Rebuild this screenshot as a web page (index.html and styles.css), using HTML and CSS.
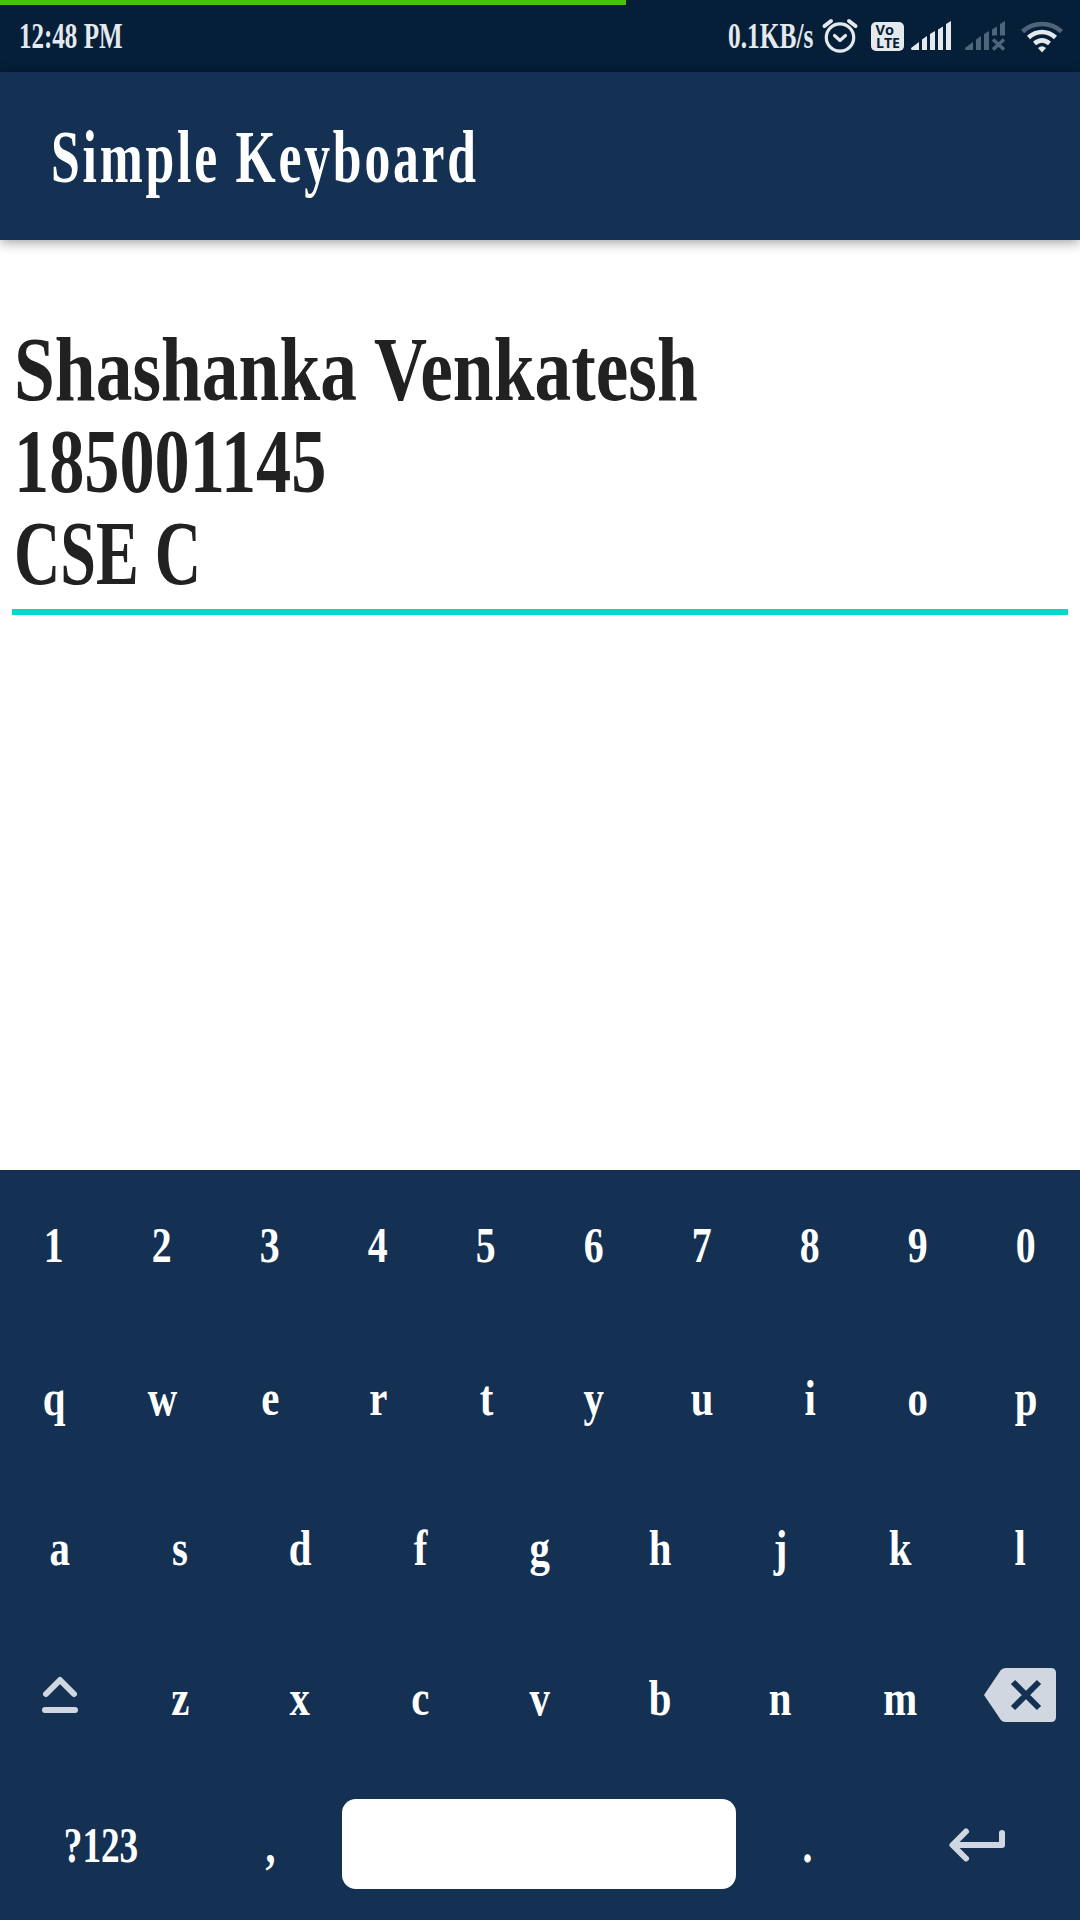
FILE: index.html
```html
<!DOCTYPE html>
<html lang="en">
<head>
<meta charset="utf-8">
<title>Simple Keyboard</title>
<link rel="stylesheet" href="styles.css">
</head>
<body>
<div class="screen">
  <div class="progress"></div>
  <header class="status">
    <span class="clock"><span class="squeeze">12:48 PM</span></span>
    <span class="rate"><span class="squeeze">0.1KB/s</span></span>
    <svg class="status-icons" viewBox="815 0 265 72" width="265" height="72">
      <g fill="none" stroke="#e4e9ed" stroke-width="3.2" stroke-linecap="round" stroke-linejoin="round">
        <circle cx="840" cy="37.5" r="13.7"/>
        <path d="M834.5 35.5l5.5 5 5.5-5"/>
        <path stroke-width="4" d="M824.5 26l6.500-5M855.500 26l-6.500-5"/>
      </g>
      <rect x="871" y="22" width="33" height="29" rx="5" fill="#e4e9ed"/>
      <text class="badge" x="875.5" y="34.8" textLength="18.5" lengthAdjust="spacingAndGlyphs">Vo</text>
      <text class="badge" x="876" y="47.5" textLength="24" lengthAdjust="spacingAndGlyphs">LTE</text>
      <path fill="#e4e9ed" d="M911 48l8-6v8h-7.500zM922 39.500l5-3.500v14h-5zM930 34l5-3v19h-5zM938 29.500l5-3v23.500h-5zM946 24l5-3v29h-5z"/>
      <g fill="#50647a">
        <path d="M965 48l8-6v8h-7.500zM976 39.500l5-3.500v14h-5zM984 34l5-3v19h-5zM992 29.500l5-3v9h-5zM1000 24l5-3v14.500h-5z"/>
        <path fill="none" stroke="#50647a" stroke-width="3.600" d="M993 39.500l11 10M1004 39.500l-11 10"/>
      </g>
      <g fill="none" stroke="#e4e9ed" stroke-width="4.500">
        <path stroke="#50647a" d="M1022.500 31.500c11-10 28-10 39 0"/>
        <path d="M1028.500 37.500c8-7.500 19-7.500 27 0M1034.500 43.500c5-4.200 10-4.200 15 0"/>
        <path fill="#e4e9ed" stroke="none" d="M1038 48q4-3.500 8 0l-4 4.500z"/>
      </g>
    </svg>
  </header>
  <div class="appbar"><h1 class="squeeze">Simple Keyboard</h1></div>
  <main class="content">
    <div class="field">
      <div class="line name"><span class="squeeze">Shashanka Venkatesh</span></div>
      <div class="line number"><span class="squeeze">185001145</span></div>
      <div class="line dept"><span class="squeeze">CSE C</span></div>
    </div>
  </main>
  <section class="keyboard">
    <div class="row ten"><b>1</b><b>2</b><b>3</b><b>4</b><b>5</b><b>6</b><b>7</b><b>8</b><b>9</b><b>0</b></div>
    <div class="row ten letters"><b>q</b><b>w</b><b>e</b><b>r</b><b>t</b><b>y</b><b>u</b><b>i</b><b>o</b><b>p</b></div>
    <div class="row nine letters"><b>a</b><b>s</b><b>d</b><b>f</b><b>g</b><b>h</b><b>j</b><b>k</b><b>l</b></div>
    <div class="row nine letters">
      <svg viewBox="0 0 120 150" width="120" height="150" fill="none" stroke="#d0d7e0" stroke-width="6" stroke-linecap="round" stroke-linejoin="round"><path d="M46 74l14-14 14 14M45 90h30"/></svg>
      <b>z</b><b>x</b><b>c</b><b>v</b><b>b</b><b>n</b><b>m</b>
      <svg viewBox="960 1620 120 150" width="120" height="150"><path fill="#d0d7e0" d="M984 1695l16.500-24.500q1.700-2.500 5-2.500h45.500q5 0 5 5v44q0 5-5 5h-45.500q-3.300 0-5-2.500z"/><path fill="none" stroke="#143153" stroke-width="6" d="M1013 1682l26 26M1039 1682l-26 26"/></svg>
    </div>
    <div class="row bottom">
      <b class="symbols">?123</b><b>,</b><span class="space"></span><b>.</b>
      <svg viewBox="874 1770 206 150" width="206" height="150" fill="none" stroke="#d0d7e0" stroke-width="6" stroke-linecap="round" stroke-linejoin="round"><path d="M966 1831.500l-13.500 13.500 13.500 13.500M953 1845h49v-12"/></svg>
    </div>
  </section>
</div>
</body>
</html>
```
FILE: styles.css
```css
* { box-sizing: border-box; }

body {
  margin: 0;
  background: #fff;
  font-family: "Liberation Serif", "Times New Roman", serif;
  font-weight: 700;
}

.screen {
  position: relative;
  display: flex;
  flex-direction: column;
  width: 1080px;
  height: 1920px;
  overflow: hidden;
}

.squeeze {
  display: inline-block;
  white-space: pre;
  transform-origin: 0 50%;
}

.progress {
  position: absolute;
  left: 0;
  top: 0;
  width: 626px;
  height: 5px;
  background: #46c208;
}

.status {
  display: flex;
  height: 72px;
  padding-left: 19px;
  background: #051f39;
  color: #e4e9ed;
  font-size: 35px;
  line-height: 73px;
}

.clock { width: 709px; }
.clock .squeeze { transform: scaleX(.715); }
.rate { width: 87px; }
.rate .squeeze { transform: scaleX(.725); }
.status-icons { flex: none; }

.badge {
  font: 700 15px "Open Sans", sans-serif;
  fill: #051f39;
}

.appbar {
  display: flex;
  align-items: center;
  height: 168px;
  padding: 2px 0 0 51px;
  background: #143153;
  color: #fff;
  box-shadow: 0 2px 12px rgba(0, 0, 0, .4);
  z-index: 1;
}

.appbar h1 {
  margin: 0;
  font-size: 74px;
  line-height: 84px;
  letter-spacing: 4px;
  transform: scaleX(.698);
}

.content {
  height: 930px;
  padding: 84px 12px 0;
}

.field {
  height: 291px;
  border-bottom: 6px solid #05d8c7;
  color: #212121;
  font-size: 91px;
  line-height: 92px;
}

.line { height: 92px; padding-left: 2px; }
.name .squeeze { transform: scaleX(.807); }
.number .squeeze { transform: scaleX(.772); }
.dept .squeeze { transform: scaleX(.705); }

.keyboard {
  height: 750px;
  background: #143153;
  color: #fff;
  font-size: 51px;
}

.row {
  display: grid;
  grid-template-rows: 150px;
  height: 150px;
  align-items: center;
  justify-items: center;
}

.row b {
  line-height: 150px;
  transform: scaleX(.78);
}

.letters b { transform: translateY(3px) scaleX(.8); }
.row .symbols { transform: scaleX(.73); }

.ten { grid-template-columns: repeat(10, 1fr); }
.nine { grid-template-columns: repeat(9, 1fr); }
.bottom { grid-template-columns: 202px 136px 402px 134px 206px; }

.space {
  width: 394px;
  height: 90px;
  margin-bottom: 2px;
  border-radius: 14px;
  background: #fff;
}
```
